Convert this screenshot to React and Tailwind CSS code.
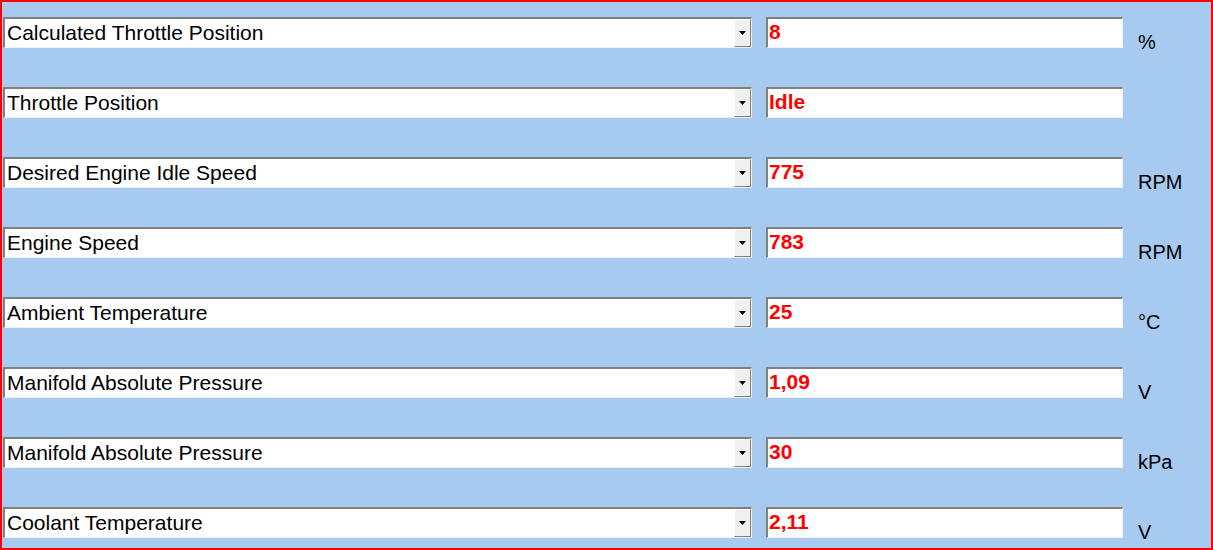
import React from "react";

const rows = [
  { label: "Calculated Throttle Position", value: "8", unit: "%" },
  { label: "Throttle Position", value: "Idle", unit: "" },
  { label: "Desired Engine Idle Speed", value: "775", unit: "RPM" },
  { label: "Engine Speed", value: "783", unit: "RPM" },
  { label: "Ambient Temperature", value: "25", unit: "°C" },
  { label: "Manifold Absolute Pressure", value: "1,09", unit: "V" },
  { label: "Manifold Absolute Pressure", value: "30", unit: "kPa" },
  { label: "Coolant Temperature", value: "2,11", unit: "V" },
];

const ComboBox = ({ label }) => (
  <div className="flex h-[31px] w-[749px] border-t-2 border-l-2 border-t-[#808080] border-l-[#808080] border-b border-r border-b-[#f0f0f0] border-r-[#f0f0f0] bg-white">
    <div className="flex-1 flex items-center pl-[2px] pb-[2px] text-[21px] text-black leading-none">{label}</div>
    <div className="w-[17px] h-full flex items-center justify-center bg-[#f0f0f0] border-t border-l border-t-white border-l-white border-b border-r border-b-[#808080] border-r-[#808080]">
      <svg width="7" height="4" viewBox="0 0 7 4">
        <path d="M0 0h7L3.5 4z" fill="#000" />
      </svg>
    </div>
  </div>
);

const ValueBox = ({ value }) => (
  <div className="flex items-center h-[31px] w-[357px] border-t-2 border-l-2 border-t-[#808080] border-l-[#808080] border-b border-r border-b-[#f0f0f0] border-r-[#f0f0f0] bg-white pl-[1px] pb-[3px] text-[21px] font-bold text-[#ff0000] leading-none">
    {value}
  </div>
);

export default function App() {
  return (
    <div
      className="w-[1213px] h-[550px] border-2 border-[#ff0000] bg-[#a6caf0] pt-[15px] pl-[1px] flex flex-col gap-[39px]"
      style={{ fontFamily: '"Liberation Sans", Arial, sans-serif' }}
    >
      {rows.map((row, i) => (
        <div key={i} className="flex items-start h-[31px]">
          <ComboBox label={row.label} />
          <div className="ml-[14px]">
            <ValueBox value={row.value} />
          </div>
          <div className="ml-[15px] pt-[15px] text-[20px] text-black leading-none">{row.unit}</div>
        </div>
      ))}
    </div>
  );
}
